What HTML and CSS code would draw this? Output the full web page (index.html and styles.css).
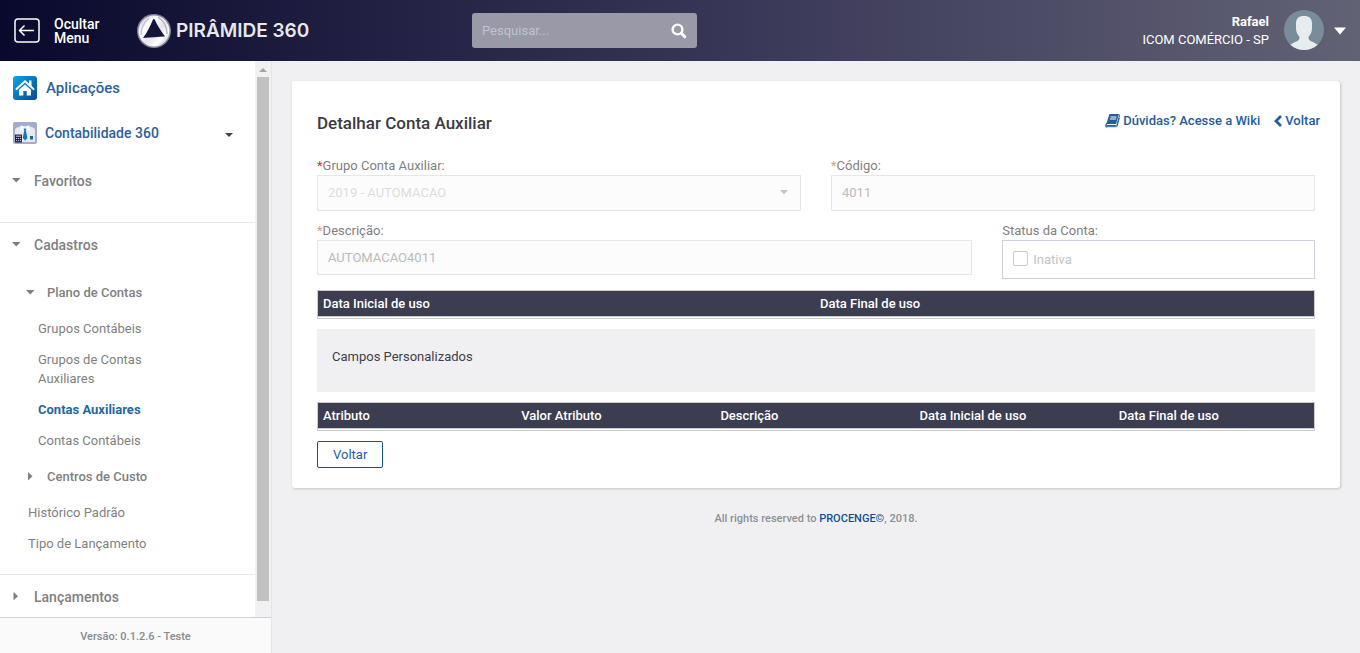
FILE: index.html
```html
<!DOCTYPE html>
<html lang="pt-BR">
<head>
<meta charset="utf-8">
<title>Pirâmide 360 - Detalhar Conta Auxiliar</title>
<link rel="stylesheet" href="styles.css">
</head>
<body>
<header class="topbar">
  <button class="menu-toggle" type="button">
    <svg width="26" height="26" viewBox="0 0 26 26" fill="none" stroke="#fff" stroke-width="1.5"><rect x="1" y="1" width="24" height="23" rx="3"/><path d="M20 12.500H5.500M10.500 7.500l-5 5 5 5"/></svg>
    <span>Ocultar<br>Menu</span>
  </button>
  <a class="brand" href="#">
    <svg width="36" height="36" viewBox="0 0 36 36">
      <defs>
        <linearGradient id="ball" x1="0" y1="0" x2="1" y2="1"><stop offset="0" stop-color="#b9b9ca"/><stop offset=".3" stop-color="#fff"/><stop offset=".55" stop-color="#e4e4ec"/><stop offset=".75" stop-color="#fff"/><stop offset="1" stop-color="#9b9bb0"/></linearGradient>
      </defs>
      <circle cx="18" cy="18" r="17" fill="#85859b"/>
      <circle cx="18" cy="18" r="15.500" fill="url(#ball)"/>
      <path d="M13 5C7 10 5 16 5 22" fill="none" stroke="#c3c3d2" stroke-width="1.500"/>
      <path d="M22 4c6 4 9 10 9 17" fill="none" stroke="#b4b4c6" stroke-width="1.500"/>
      <path d="M17 6.500c.5-.8 1.200-.8 1.700 0C21 12 25 18 29 23.500c-7 .5-14 .8-22 1.500C11.500 19 14.500 12.500 17 6.500Z" fill="#14143a"/>
    </svg>
    <span>PIRÂMIDE 360</span>
  </a>
  <form class="search">
    <input type="text" placeholder="Pesquisar..." aria-label="Pesquisar">
    <button type="button" aria-label="Buscar"><svg width="16" height="16" viewBox="0 0 16 16" fill="none" stroke="#fff"><circle cx="6.500" cy="6.500" r="4.900" stroke-width="2.400"/><path d="M10.300 10.300l3.500 3.500" stroke-width="3" stroke-linecap="round"/></svg></button>
  </form>
  <div class="user">
    <div class="user-text"><strong>Rafael</strong><span>ICOM COMÉRCIO - SP</span></div>
    <svg class="avatar" width="40" height="40" viewBox="0 0 40 40">
      <defs><clipPath id="round"><circle cx="20" cy="20" r="20"/></clipPath></defs>
      <g clip-path="url(#round)"><rect width="40" height="40" fill="#788d99"/><path d="M20 6c5.500 0 8 2.500 8 7.500 0 3 .2 5-.3 7.500-.7 3-2.200 4.500-3.200 6 0 2 .5 3.500 2.500 4.300 3.500 1.400 6 2.700 8 4.700v4H5v-4c2-2 4.500-3.300 8-4.700 2-.8 2.500-2.300 2.500-4.300-1-1.500-2.500-3-3.200-6-.5-2.500-.3-4.500-.3-7.500C12 8.500 14.500 6 20 6Z" fill="#e7edee"/></g>
    </svg>
    <svg width="12" height="8" viewBox="0 0 12 8"><path d="M0 .5h12L6 7.500Z" fill="#fff"/></svg>
  </div>
</header>
<div class="layout">
  <aside class="sidebar">
    <div class="sidebar-body">
      <nav class="nav">
        <a class="app" href="#">
          <svg width="24" height="24" viewBox="0 0 24 24"><defs><linearGradient id="home" x1="0" y1="0" x2="1" y2="1"><stop offset="0" stop-color="#08a7e8"/><stop offset="1" stop-color="#07488f"/></linearGradient></defs><rect width="24" height="24" rx="3" fill="url(#home)"/><path d="M3.500 13 12 5.300l8.500 7.700" fill="none" stroke="#fff" stroke-width="2" stroke-linecap="round"/><path d="M16 4.500h2.500v6L16 8.500Z" fill="#fff"/><path d="M12 8.500l6 5.300V19.500h-4.300v-4.500h-3.400v4.500H6v-5.700Z" fill="#fff"/></svg>
          <span>Aplicações</span>
        </a>
        <a class="app app-module" href="#">
          <svg width="24" height="22" viewBox="0 0 24 22"><rect width="24" height="22" rx="2" fill="#a4abcc"/><path d="M2 20V8q0-2 2-2.500L9 4h6l5 1.500q2 .5 2 2.500v12Z" fill="#e6e9f2"/><path d="m8 3 4 3 4-3 1 6-5-2-5 2Z" fill="#fff"/><path d="M10.500 6.500h3l-.7 2 1.700 7.500-2.400 2.500L9.700 16l1.600-7.500Z" fill="#1479b8"/><rect x="2" y="12.500" width="7" height="8" fill="#20213f"/><path d="M3 14.200h5M3 16.500h1.200m.8 0h1.200m.8 0h1.200M3 18.700h1.200m.8 0h1.200m.8 0h1.200" stroke="#c8cce0"/><rect x="17" y="14" width="3" height="3.500" fill="#17649d"/></svg>
          <span>Contabilidade 360</span>
          <svg class="app-caret" width="8" height="8" viewBox="0 0 8 8"><path d="M0 4h8L4 8Z"/></svg>
        </a>
        <section class="group favorites">
          <a class="group-title" href="#"><svg width="8" height="8" viewBox="0 0 8 8"><path d="M0 1h8.500L4.250 5.500Z"/></svg>Favoritos</a>
        </section>
        <section class="group">
          <a class="group-title" href="#"><svg width="8" height="8" viewBox="0 0 8 8"><path d="M0 1h8.500L4.250 5.500Z"/></svg>Cadastros</a>
          <a class="subgroup first" href="#"><svg width="8" height="8" viewBox="0 0 8 8"><path d="M0 1h8.500L4.250 5.500Z"/></svg>Plano de Contas</a>
          <ul class="leaves">
            <li><a href="#">Grupos Contábeis</a></li>
            <li><a href="#">Grupos de Contas Auxiliares</a></li>
            <li><a class="active" href="#">Contas Auxiliares</a></li>
            <li><a href="#">Contas Contábeis</a></li>
          </ul>
          <a class="subgroup" href="#"><svg width="8" height="8" viewBox="0 0 8 8"><path d="M2 -1v8.500l4.500-4.250Z"/></svg>Centros de Custo</a>
          <ul class="leaves outer">
            <li><a href="#">Histórico Padrão</a></li>
            <li><a href="#">Tipo de Lançamento</a></li>
          </ul>
        </section>
        <section class="group">
          <a class="group-title" href="#"><svg width="8" height="8" viewBox="0 0 8 8"><path d="M1.500 -1v8.500l4.500-4.250Z"/></svg>Lançamentos</a>
        </section>
      </nav>
      <div class="scroll-track"><svg width="10" height="16" viewBox="0 0 10 16"><path d="M1 11h8L5 7Z" fill="#a3a3a3"/></svg><div class="scroll-thumb"></div></div>
    </div>
    <div class="version">Versão: 0.1.2.6 - Teste</div>
  </aside>
  <main class="main">
    <section class="card">
      <div class="card-head">
        <h1>Detalhar Conta Auxiliar</h1>
        <div class="links">
          <a href="#"><svg width="15" height="14" viewBox="0 0 15 14"><path d="M4.500.5h9q1.300 0 1 1.200L12 10.500q-.3 1-1.500 1H3q-1.200 0-1 .8.1.4.8.4h8.500q.6 0 .8-.6l2.200-8" fill="none" stroke="#235d9c"/><path d="M4.300.5h9.500L11 10H1.300Z" fill="#235d9c"/><path d="M5.500 3h6M4.900 5h6" stroke="#fff"/><path d="M2 9.500C.5 10.500.5 13 2.300 13" fill="none" stroke="#235d9c" stroke-width="1.500"/></svg>Dúvidas? Acesse a Wiki</a>
          <a href="#"><svg width="8" height="12" viewBox="0 0 8 12"><path d="M7 1 2 6l5 5" fill="none" stroke="#235d9c" stroke-width="2.800"/></svg>Voltar</a>
        </div>
      </div>
      <form class="fields">
        <div class="field half">
          <label for="grupo"><b class="required">*</b>Grupo Conta Auxiliar:</label>
          <div class="select-box"><select id="grupo" disabled><option>2019 - AUTOMACAO</option></select><svg width="8" height="5" viewBox="0 0 8 5"><path d="M0 0h8L4 4.500Z"/></svg></div>
        </div>
        <div class="field half">
          <label for="codigo"><b class="required faded">*</b>Código:</label>
          <input id="codigo" type="text" value="4011" disabled>
        </div>
        <div class="field wide">
          <label for="descricao"><b class="required faded">*</b>Descrição:</label>
          <input id="descricao" type="text" value="AUTOMACAO4011" disabled>
        </div>
        <div class="field narrow">
          <span class="caption">Status da Conta:</span>
          <div class="status"><input id="inativa" type="checkbox" disabled><label for="inativa">Inativa</label></div>
        </div>
      </form>
      <table class="grid">
        <thead><tr><th>Data Inicial de uso</th><th>Data Final de uso</th></tr></thead>
      </table>
      <h2 class="panel">Campos Personalizados</h2>
      <table class="grid">
        <thead><tr><th>Atributo</th><th>Valor Atributo</th><th>Descrição</th><th>Data Inicial de uso</th><th>Data Final de uso</th></tr></thead>
      </table>
      <button class="back" type="button">Voltar</button>
    </section>
    <footer class="rights">All rights reserved to <a href="#">PROCENGE©</a>, 2018.</footer>
  </main>
</div>
</body>
</html>
```
FILE: styles.css
```css
* { box-sizing: border-box; }
body {
  margin: 0;
  min-height: 100vh;
  display: flex;
  flex-direction: column;
  font-family: Roboto, "Liberation Sans", sans-serif;
  font-size: 13px;
  line-height: 19px;
  color: #7f7f7f;
  background: #f0f0f3;
}
a { color: inherit; text-decoration: none; }
button, input, select { font: inherit; }
svg { flex: none; display: block; overflow: visible; }

.topbar {
  height: 61px;
  display: flex;
  align-items: center;
  padding: 0 14px;
  color: #fff;
  background: linear-gradient(90deg, #09092d, #3a3858 55%, #626275);
}
.menu-toggle {
  display: flex;
  align-items: center;
  gap: 14px;
  width: 122px;
  padding: 0;
  border: 0;
  background: none;
  color: #fff;
  font-size: 14px;
  font-weight: 500;
  line-height: 14px;
  text-align: left;
}
.brand {
  display: flex;
  align-items: center;
  gap: 4px;
  width: 336px;
  font-family: Inter, sans-serif;
  font-size: 19px;
  font-weight: 600;
  color: #e7e7ec;
}
.search {
  display: flex;
  align-items: center;
  width: 225px;
  height: 35px;
  padding: 0 10px;
  border-radius: 3px;
  background: #9a99a8;
}
.search input {
  flex: 1;
  min-width: 0;
  padding: 0;
  border: 0;
  outline: 0;
  background: none;
  color: #fff;
}
.search input::placeholder { color: #bcc4d0; }
.search button { padding: 0; border: 0; background: none; }
.user { display: flex; align-items: center; margin-left: auto; }
.user-text {
  display: flex;
  flex-direction: column;
  text-align: right;
  line-height: 18px;
}
.user-text strong { font-weight: 700; }
.avatar { margin: 0 10px 1px 15px; }

.layout { flex: 1; display: flex; }
.sidebar {
  width: 272px;
  display: flex;
  flex-direction: column;
  border-right: 1px solid #e5e5e8;
  background: #fff;
}
.sidebar-body { flex: 1; display: flex; }
.nav { flex: 1; padding-top: 15px; font-weight: 500; }
.app {
  display: flex;
  align-items: center;
  gap: 9px;
  padding: 0 22px 0 13px;
  font-size: 15px;
  line-height: 24px;
  color: #2e5f9b;
}
.app-module { gap: 8px; margin-top: 21px; font-size: 14px; }
.app-caret { margin-left: auto; fill: #3f444a; }
.group { padding-top: 12px; border-top: 1px solid #e7e7e7; }
.group svg { fill: #7f7f7f; }
.favorites { height: 77px; padding-top: 26px; border-top: 0; }
.group-title {
  display: flex;
  align-items: center;
  gap: 14px;
  padding-left: 12px;
  font-size: 14px;
  line-height: 20px;
}
.subgroup {
  display: flex;
  align-items: center;
  gap: 13px;
  padding-left: 26px;
  margin: 7px 0;
}
.subgroup.first { margin-top: 28px; }
.leaves {
  width: 190px;
  margin: 0 0 17px;
  padding: 10px 0 0 38px;
  list-style: none;
  display: flex;
  flex-direction: column;
  gap: 12px;
  font-weight: 400;
}
.leaves.outer { padding-left: 28px; margin-bottom: 21px; }
.leaves .active { font-weight: 700; color: #23689f; }
.scroll-track {
  width: 16px;
  padding: 0 2px 16px;
  display: flex;
  flex-direction: column;
  align-items: center;
  background: #f1f1f1;
}
.scroll-thumb { flex: 1; width: 12px; background: #c1c1c1; }
.version {
  padding: 9px 0 7px;
  border-top: 1px solid #cfd1da;
  background: #fafafa;
  color: #868b92;
  font-size: 11px;
  font-weight: 500;
  text-align: center;
}

.main { flex: 1; min-width: 0; padding: 20px; }
.card {
  padding: 30px 25px 20px;
  border-radius: 3px;
  background: #fff;
  box-shadow: 1px 1px 3px rgba(0, 0, 0, .18);
}
.card-head {
  display: flex;
  justify-content: space-between;
  align-items: flex-start;
  margin-right: -5px;
}
.card-head h1 {
  margin: 0;
  font-size: 17px;
  font-weight: 500;
  line-height: 25px;
  color: #3b3b43;
}
.links { display: flex; gap: 14px; line-height: 20px; font-weight: 500; color: #235d9c; }
.links a { display: flex; align-items: center; gap: 3px; }
.fields {
  display: grid;
  grid-template-columns: repeat(12, minmax(0, 1fr));
  column-gap: 30px;
  row-gap: 10px;
  margin: 20px 0 11px;
}
.half { grid-column: span 6; }
.wide { grid-column: span 8; }
.narrow { grid-column: span 4; }
.field > label, .caption { display: block; }
.required { font-weight: 400; color: #ff1a1a; }
.required.faded { color: #f0966e; }
.field input[type="text"], .select-box select {
  display: block;
  width: 100%;
  height: 36px;
  padding: 0 10px 1px;
  border: 1px solid #e4e6e9;
  border-radius: 0;
  background: #fcfcfc;
  color: #bbb;
}
.wide input[type="text"] { height: 35px; }
.select-box { position: relative; }
.select-box select { appearance: none; opacity: 1; color: #dcdcdc; }
.select-box svg { position: absolute; right: 13px; top: 15px; fill: #c8c8c8; }
.status {
  height: 39px;
  display: flex;
  align-items: center;
  gap: 5px;
  padding: 0 10px;
  border: 1px solid #cfd1da;
  color: #c4c4c4;
}
.status input {
  appearance: none;
  width: 15px;
  height: 15px;
  margin: 0 0 3px;
  border: 1px solid #ccc;
  border-radius: 2px;
}
.grid {
  width: 100%;
  table-layout: fixed;
  border-collapse: separate;
  border-spacing: 0;
  border: 1px solid #ccc;
  padding-bottom: 1px;
}
.grid th {
  padding: 3px 4px;
  border-bottom: 1px solid #ccc;
  background: #3c3d50;
  color: #fff;
  font-weight: 500;
  text-align: left;
}
.grid th:first-child { padding-left: 5px; }
.panel {
  margin: 10px 0;
  padding: 18px 15px 26px;
  background: #f0f0f3;
  color: #3f3f47;
  font-size: 13px;
  font-weight: 400;
}
.back {
  display: block;
  margin-top: 10px;
  padding: 3px 15px;
  border: 1px solid #14508f;
  border-radius: 2px;
  background: #fff;
  color: #235d9c;
}
.rights {
  margin-top: 21px;
  color: #8b9096;
  font-size: 11px;
  font-weight: 500;
  text-align: center;
}
.rights a { color: #14508f; }
```
